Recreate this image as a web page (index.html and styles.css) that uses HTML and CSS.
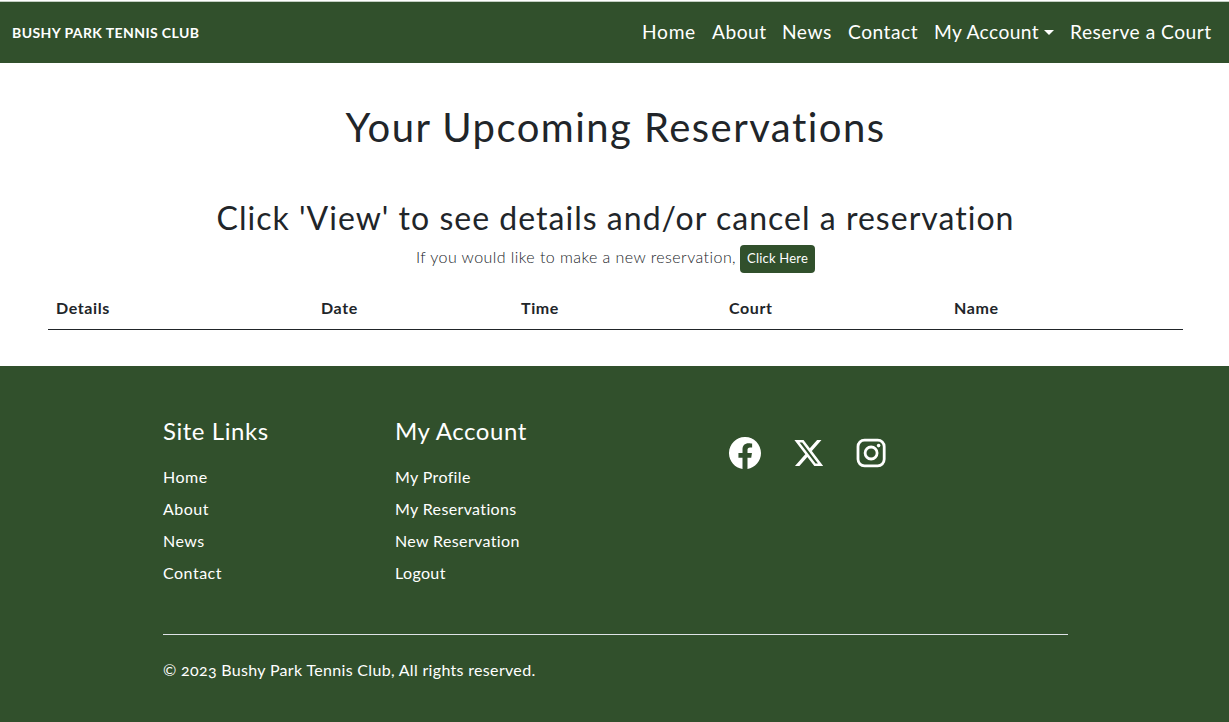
FILE: index.html
```html
<!DOCTYPE html>
<html lang="en">
<head>
<meta charset="utf-8">
<title>Bushy Park Tennis Club</title>
<link rel="stylesheet" href="styles.css">
</head>
<body>
<header class="navbar">
  <a class="brand">BUSHY PARK TENNIS CLUB</a>
  <nav class="nav">
    <a class="nav-home">Home</a>
    <a class="nav-about">About</a>
    <a class="nav-news">News</a>
    <a class="nav-contact">Contact</a>
    <a class="nav-account"><span>My Account</span><i class="caret"></i></a>
    <a class="nav-reserve">Reserve a Court</a>
  </nav>
</header>
<main class="main">
  <h1>Your Upcoming Reservations</h1>
  <h2>Click 'View' to see details and/or cancel a reservation</h2>
  <div class="prompt"><span class="prompt-text">If you would like to make a new reservation,</span><a class="btn">Click Here</a></div>
  <div class="table-head">
    <span>Details</span><span>Date</span><span>Time</span><span>Court</span><span>Name</span>
  </div>
</main>
<footer class="footer">
  <div class="columns">
    <section class="column site-links">
      <h3>Site Links</h3>
      <a>Home</a><a>About</a><a>News</a><a>Contact</a>
    </section>
    <section class="column">
      <h3>My Account</h3>
      <a>My Profile</a><a>My Reservations</a><a>New Reservation</a><a>Logout</a>
    </section>
    <div class="social">
      <svg width="32" height="32" viewBox="0 0 16 16" fill="#fff"><path d="M16 8.049c0-4.446-3.582-8.05-8-8.05C3.58 0-.002 3.603-.002 8.05c0 4.017 2.926 7.347 6.75 7.951v-5.625h-2.03V8.05H6.75V6.275c0-2.017 1.195-3.131 3.022-3.131.876 0 1.791.157 1.791.157v1.98h-1.009c-.993 0-1.303.621-1.303 1.258v1.51h2.218l-.354 2.326H9.25V16c3.824-.604 6.75-3.934 6.75-7.951"/></svg>
      <svg width="29" height="32" viewBox="0 0 29 32"><path transform="translate(.4 1.6) scale(1.8)" fill="#fff" d="M12.6.75h2.454l-5.36 6.142L16 15.25h-4.937l-3.867-5.07-4.425 5.07H.316l5.733-6.57L0 .75h5.063l3.495 4.633L12.601.75Zm-.86 13.028h1.36L4.323 2.145H2.865z"/></svg>
      <svg width="30" height="32" viewBox="0 0 30 32" fill="none" stroke="#fff" stroke-width="2.8"><rect x="2" y="3.2" width="26.2" height="25.6" rx="6.5"/><circle cx="15.1" cy="16" r="6"/><circle cx="22.6" cy="8.6" r="1.8" fill="#fff" stroke="none"/></svg>
    </div>
  </div>
  <p class="copyright">© 2023 Bushy Park Tennis Club, All rights reserved.</p>
</footer>
</body>
</html>
```
FILE: styles.css
```css
* { box-sizing: border-box; }
body {
  margin: 0;
  height: 722px;
  display: flex;
  flex-direction: column;
  background: #fff;
  color: #212529;
  font: 400 16px/24px Lato, "Open Sans", sans-serif;
  font-variant-ligatures: none;
  white-space: nowrap;
}
h1, h2, h3, p { margin: 0; font-weight: 400; }
.navbar {
  height: 62px;
  margin-top: 1px;
  flex: none;
  display: flex;
  align-items: center;
  justify-content: space-between;
  padding: 0 18px 0 12px;
  border-top: 1px solid #c3cec2;
  background: #31502c;
  color: #fff;
}
.brand { font-size: 14px; font-weight: 700; letter-spacing: .41px; }
.nav { display: flex; gap: 16px; font-size: 19.2px; letter-spacing: .5px; }
.nav a { display: flex; align-items: center; padding-bottom: 1px; }
.nav-home { width: 54px; letter-spacing: .7px; }
.nav-about { width: 54px; }
.nav-news { width: 50px; }
.nav-contact { width: 70px; }
.nav-account { width: 120px; justify-content: space-between; letter-spacing: .4px; }
.nav-reserve { width: 141px; }
.caret { border: 5px solid transparent; border-top-color: #fff; border-bottom: 0; }
.main { height: 303px; flex: none; padding: 40px 46px 0 48px; text-align: center; }
h1 { font-size: 40px; line-height: 48px; letter-spacing: 1.46px; }
h2 { font-size: 32px; line-height: 38px; margin-top: 48px; letter-spacing: 1.02px; }
.prompt { display: flex; justify-content: center; gap: 4px; margin-top: 8px; height: 28px; }
.prompt-text { font-weight: 300; letter-spacing: .44px; }
.btn { width: 75px; height: 28px; border-radius: 4px; background: #31502c; color: #fff; font-size: 13px; line-height: 27px; letter-spacing: .2px; }
.table-head {
  display: grid;
  grid-template-columns: 265px 200px 208px 225px 1fr;
  margin-top: 15px;
  height: 42px;
  padding: 8px;
  border-bottom: 1px solid #212529;
  text-align: left;
  font-weight: 700;
  letter-spacing: .6px;
}
.footer { flex: 1; padding: 48px 161px 0 163px; background: #31502c; color: #fff; }
.columns { display: flex; height: 221px; border-bottom: 1px solid #dee2e6; }
.column { width: 232px; display: flex; flex-direction: column; gap: 8px; letter-spacing: .36px; }
.site-links { letter-spacing: .5px; }
.column h3 { font-size: 24px; line-height: 34px; margin-bottom: 9px; letter-spacing: .55px; }
.social { display: flex; gap: 33px; padding: 23px 0 0 102px; }
.social svg { display: block; }
.copyright { padding-top: 23px; font-variant-numeric: oldstyle-nums; letter-spacing: .32px; }
```
